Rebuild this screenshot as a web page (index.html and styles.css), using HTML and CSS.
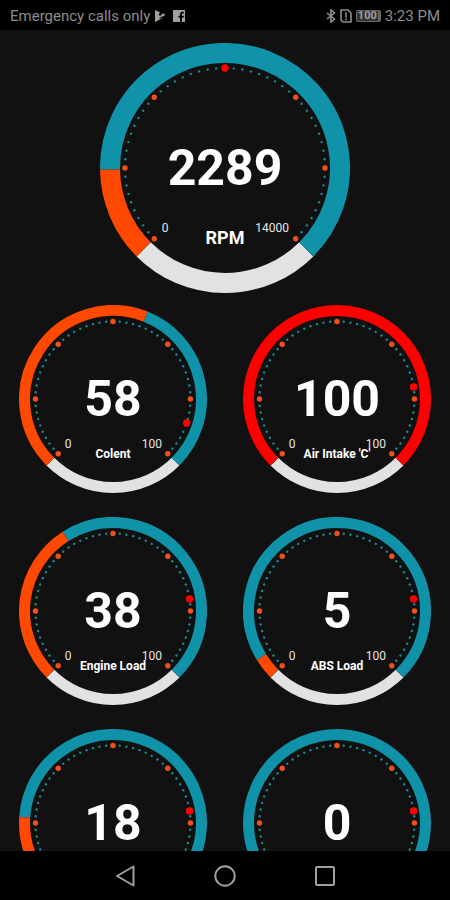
FILE: index.html
```html
<!DOCTYPE html>
<html lang="en">
<head>
    <meta charset="UTF-8">
    <meta name="viewport" content="width=device-width, initial-scale=1.0">
    <title>Dashboard</title>
    <link rel="stylesheet" href="styles.css">
</head>
<body>
    <!-- Status bar -->
    <header class="status-bar">
        <div class="status-left">
            <span>Emergency calls only</span>
            <svg class="icon-play" viewBox="0 0 12 12">
                <path d="M1 0 L6.2 2.6 L4.6 4.6 L6 6 L9 3.2 L11.5 5 L5.2 8 L6 8.8 L10.5 7.2 L1 12 Z"/>
            </svg>
            <svg class="icon-facebook" viewBox="0 0 12 12">
                <path fill-rule="evenodd" d="M0 0 H12 V12 H9 V7.6 H10.8 V5.8 H9 V4.2 Q9 3.4 9.8 3.4 H10.8 V1.7 H9.2 Q7 1.7 7 4 V5.8 H5.4 V7.6 H7 V12 H0 Z"/>
            </svg>
        </div>
        <div class="status-right">
            <svg class="icon-bluetooth" viewBox="0 0 10 14">
                <path d="M1 4 L8.5 10 L5 13 V1 L8.5 4 L1 10"/>
            </svg>
            <svg class="icon-sim" viewBox="0 0 12 14">
                <path d="M1 1 H8 L11 4 V13 H3 L1 11 Z"/>
                <path d="M6 3.6 V8.4 M6 9.4 V11.2"/>
            </svg>
            <span class="battery">100</span>
            <span>3:23 PM</span>
        </div>
    </header>

    <!-- Gauges -->
    <main class="dashboard">
        <svg class="gauge gauge-large" data-size="250" data-stroke="20" data-dots="100" data-value="2289" data-max="14000" data-marker="0.5" data-label="RPM"></svg>

        <div class="gauge-grid">
            <svg class="gauge" data-value="58" data-marker="0.9" data-label="Colent"></svg>
            <svg class="gauge" data-value="100" data-marker="0.8" data-label="Air Intake 'C'"></svg>
            <svg class="gauge" data-value="38" data-marker="0.8" data-label="Engine Load"></svg>
            <svg class="gauge" data-value="5" data-marker="0.8" data-label="ABS Load"></svg>
            <svg class="gauge" data-value="18" data-marker="0.8"></svg>
            <svg class="gauge" data-value="0" data-marker="0.8"></svg>
        </div>
    </main>

    <!-- Navigation bar -->
    <nav class="nav-bar">
        <button class="nav-button" aria-label="Back">
            <svg viewBox="0 0 24 24"><path d="M20.5 2.5 V21.5 L4 12 Z"/></svg>
        </button>
        <button class="nav-button" aria-label="Home">
            <svg viewBox="0 0 24 24"><circle cx="12" cy="12" r="9.7"/></svg>
        </button>
        <button class="nav-button" aria-label="Recent apps">
            <svg viewBox="0 0 24 24"><rect x="3" y="3" width="18" height="18" rx="1"/></svg>
        </button>
    </nav>

    <script src="gauges.js"></script>
</body>
</html>
```
FILE: styles.css
```css
body {
    font-family: Roboto, "Liberation Sans", sans-serif;
    display: flex;
    flex-direction: column;
    height: 100vh;
    margin: 0;
    background: #111;
    color: #fff;
}

/* Status bar */
.status-bar {
    display: flex;
    justify-content: space-between;
    align-items: center;
    height: 30px;
    padding: 2px 10px 0;
    box-sizing: border-box;
    flex-shrink: 0;
    background: #000;
    color: #8c8c8c;
    font-size: 15px;
}

.status-left,
.status-right {
    display: flex;
    align-items: center;
    gap: 4px;
    white-space: nowrap;
}

.status-bar svg {
    fill: #a0a0a0;
}

.icon-play {
    width: 12px;
    height: 12px;
}

.icon-facebook {
    width: 12px;
    height: 12px;
    margin-left: 3px;
}

.status-bar .icon-bluetooth,
.status-bar .icon-sim {
    height: 14px;
    fill: none;
    stroke: #8c8c8c;
    stroke-width: 1.6;
}

.icon-bluetooth {
    width: 10px;
}

.icon-sim {
    width: 12px;
}

.battery {
    padding: 0 1px;
    border: 1px solid #666;
    border-right-width: 3px;
    border-radius: 2px;
    background: #333;
    color: #a0a0a0;
    font-size: 11px;
    font-weight: bold;
    line-height: 10px;
}

/* Gauges */
.dashboard {
    display: flex;
    flex: 1;
    flex-direction: column;
    align-items: center;
    gap: 12px;
    min-height: 0;
    padding-top: 13px;
    overflow-y: auto;
    scrollbar-width: none;
}

.gauge {
    display: block;
    width: 100%;
}

.gauge-large {
    flex-shrink: 0;
    max-width: 250px;
}

.gauge-grid {
    display: grid;
    grid-template-columns: 1fr 1fr;
    gap: 24px 36px;
    width: 100%;
    padding: 0 19px;
    box-sizing: border-box;
}

.arc {
    fill: none;
}

.arc-base {
    stroke: #e2e2e2;
}

.arc-range {
    stroke: #1092a9;
}

.arc-value {
    stroke: #ff4800;
}

.arc-full {
    stroke: #f00;
}

.dot {
    fill: #1b8896;
}

.dot-major {
    fill: #f1501c;
}

.dot-marker {
    fill: #f00;
}

.gauge text {
    fill: #fff;
    font-weight: bold;
    text-anchor: middle;
}

.gauge .value {
    font-size: 50px;
}

.gauge .label {
    font-size: 12px;
}

.gauge-large .label {
    font-size: 18px;
}

.gauge .limit {
    fill: #e6e6e6;
    font-size: 12px;
    font-weight: normal;
}

.gauge .limit-max {
    text-anchor: end;
}

/* Navigation bar */
.nav-bar {
    display: flex;
    justify-content: center;
    align-items: center;
    gap: 52px;
    height: 49px;
    flex-shrink: 0;
    background: #000;
}

.nav-button {
    width: 48px;
    height: 48px;
    padding: 12px;
    border: none;
    background: none;
    cursor: pointer;
}

.nav-button svg {
    display: block;
    fill: none;
    stroke: #a0a0a0;
    stroke-width: 2;
    stroke-linejoin: round;
}
```
FILE: gauges.js
```js
const START = -135;
const SWEEP = 270;

// Angle is measured clockwise from the top of the dial
function point(center, radius, angle) {
    const rad = (angle * Math.PI) / 180;
    return [center + radius * Math.sin(rad), center - radius * Math.cos(rad)];
}

function arc(center, radius, from, to, width, className) {
    if (to <= from) {
        return '';
    }
    const [x1, y1] = point(center, radius, from);
    const [x2, y2] = point(center, radius, to);
    const large = to - from > 180 ? 1 : 0;
    return `<path class="arc ${className}" stroke-width="${width}" d="M${x1} ${y1} A${radius} ${radius} 0 ${large} 1 ${x2} ${y2}"/>`;
}

function dot(center, radius, angle, size, className) {
    const [x, y] = point(center, radius, angle);
    return `<circle class="${className}" cx="${x}" cy="${y}" r="${size}"/>`;
}

function drawGauge(svg) {
    const data = svg.dataset;
    const size = Number(data.size || 188);
    const stroke = Number(data.stroke || 11);
    const dotRadius = Number(data.dots || 77.5);
    const max = Number(data.max || 100);
    const center = size / 2;
    const radius = center - stroke / 2;
    const fraction = data.value / max;
    const split = START + SWEEP * fraction;
    const end = START + SWEEP;
    const large = size > 200;

    let html = arc(center, radius, end, START + 360, stroke, 'arc-base');
    html += arc(center, radius, split, end, stroke, 'arc-range');
    html += arc(center, radius, START, split, stroke, fraction >= 1 ? 'arc-full' : 'arc-value');

    for (let i = 0; i <= 54; i++) {
        if (i % 9 !== 0) {
            html += dot(center, dotRadius, START + i * 5, 1.2, 'dot');
        } else {
            html += dot(center, dotRadius, START + i * 5, 2.7, 'dot-major');
        }
    }
    html += dot(center, dotRadius, START + SWEEP * data.marker, 3.7, 'dot-marker');

    html += `<text class="value" x="${center}" y="${center + 17}">${data.value}</text>`;

    if (data.label) {
        const limitX = large ? 60 : 45;
        const limitY = large ? 64 : 49;
        html += `<text class="limit" x="${center - limitX}" y="${center + limitY}">0</text>`;
        html += `<text class="limit limit-max" x="${center + limitX + 4}" y="${center + limitY}">${max}</text>`;
        html += `<text class="label" x="${center}" y="${center + (large ? 76 : 59)}">${data.label}</text>`;
    }

    svg.setAttribute('viewBox', `0 0 ${size} ${size}`);
    svg.innerHTML = html;
}

document.querySelectorAll('.gauge').forEach(drawGauge);
```
